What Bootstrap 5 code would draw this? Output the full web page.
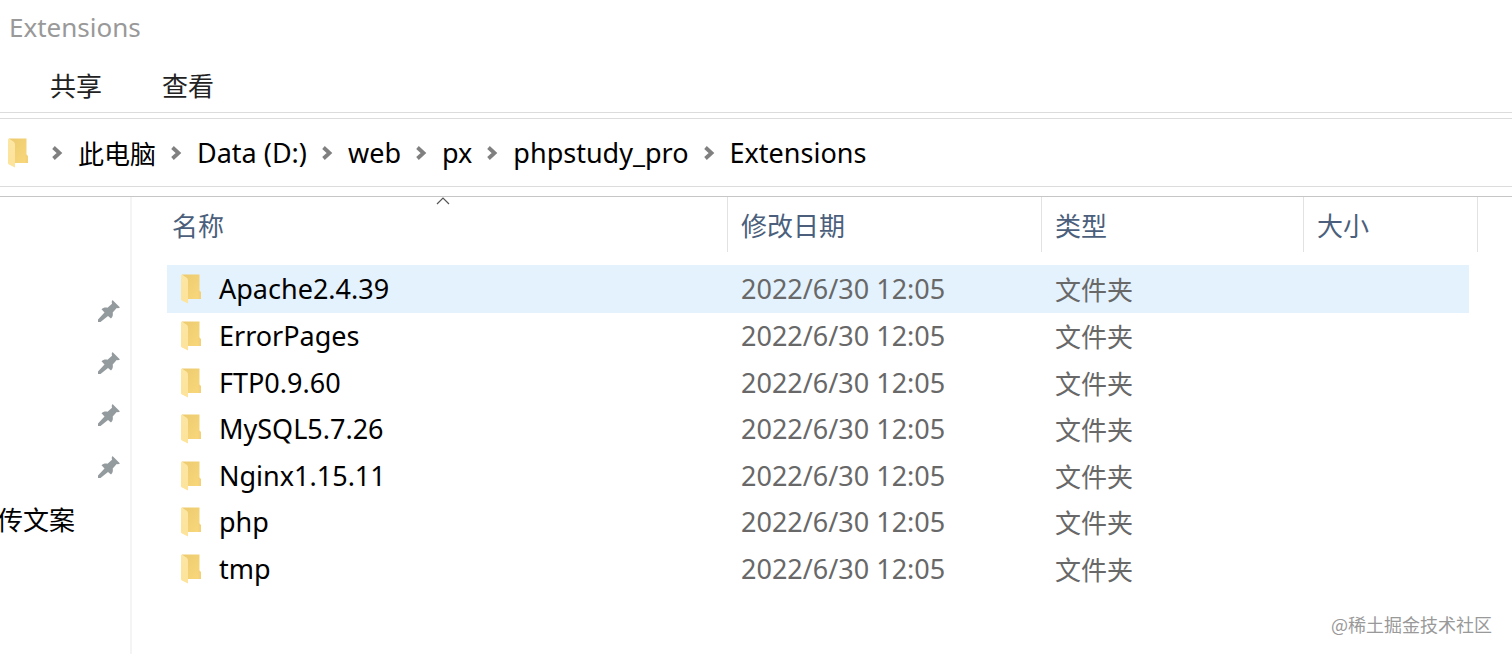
<!DOCTYPE html>
<html lang="zh-CN">
<head>
<meta charset="utf-8">
<meta name="viewport" content="width=device-width, initial-scale=1">
<title>Extensions</title>
<link href="https://cdn.jsdelivr.net/npm/bootstrap@5.3.0/dist/css/bootstrap.min.css" rel="stylesheet">
<style>
  body { font-family: "Noto Sans", "Noto Sans CJK SC", sans-serif; font-size: 27px; line-height: 36px; color: #000; background: #fff; }
  .cjk { font-family: "Noto Sans CJK SC", sans-serif; font-size: 26px; }
  .window-title { height: 54px; padding-left: 9px; color: #999; font-size: 26px; }
  .ribbon { height: 59px; gap: 60px; padding: 4px 50px 0; border-bottom: 1px solid #dcdcdc; }
  .ribbon button { color: #222; font-size: 26px; line-height: 36px; }
  .address { height: 69px; margin-top: 5px; padding-left: 8px; border: solid #dcdcdc; border-width: 1px 0; }
  .address a { color: #000; }
  .folder { width: 21px; height: 30px; }
  .arrow { width: 11px; height: 16px; margin: 0 15px; }
  .panes { margin-top: 9px; border-top: 1px solid #c6c6c6; }
  .sidebar { width: 132px; padding-top: 88px; border-right: 2px solid #f4f4f4; }
  .sidebar li { height: 52px; padding-right: 9px; }
  .sidebar .label { margin-left: -3px; }
  .pin { width: 24px; height: 24px; }
  .files { padding: 0 34px 0 35px; }
  .files table { table-layout: fixed; border-collapse: separate; border-spacing: 0; }
  .files th { height: 55px; padding: 0 0 0 13px; border-right: 1px solid #e2e2e2; color: #4b5f7c; font-weight: 400; vertical-align: middle; }
  .files th:first-child { padding-left: 5px; }
  .files thead::after { content: ""; display: block; height: 13px; }
  .files td { height: 47px; padding: 0 0 0 13px; color: #686868; vertical-align: middle; }
  .files tr:nth-child(even) td { height: 46px; }
  .files td:first-child { padding-left: 14px; color: #000; }
  .files tr.selected td { height: 48px; background: #e4f2fd; background-clip: padding-box; }
  .files td:last-child { border-right: 9px solid transparent; }
  .entry { gap: 17px; }
  .col-date { width: 314px; } .col-type { width: 262px; } .col-size { width: 174px; }
  .sort { width: 14px; height: 8px; top: 0; left: 269px; }
  .watermark { right: 20px; bottom: 16px; font-size: 18px; line-height: 27px; color: #999; }
</style>
</head>
<body class="min-vh-100 d-flex flex-column position-relative overflow-x-hidden">
<svg class="position-absolute" width="0" height="0" aria-hidden="true">
  <defs>
    <linearGradient id="gold" x1="0" y1="0" x2="1" y2="1"><stop offset="0" stop-color="#eccb70"/><stop offset="1" stop-color="#f9d87c"/></linearGradient>
    <linearGradient id="cream" x1="0" y1="0" x2="0" y2="1"><stop offset="0" stop-color="#fce6a4"/><stop offset="1" stop-color="#fde39a"/></linearGradient>
  </defs>
  <symbol id="i-folder" viewBox="0 0 21 30"><path d="M1 .5h17.500v16l1 1.500v7H5L1 22z" fill="url(#gold)"/><path d="M17.500 16l2.500 2v7h-2.500z" fill="#f4d078"/><path d="M1 .5L6 4Q7 5 7 7v22.500L1 26.500Q0 26 0 25V1.500Q0 .500 1 .500z" fill="url(#cream)"/></symbol>
  <symbol id="i-arrow" viewBox="0 0 11 16"><path d="M1.500 2.500L7.500 8l-6 5.500" fill="none" stroke="#808080" stroke-width="3.800"/></symbol>
  <symbol id="i-pin" viewBox="0 0 24 24"><path d="M15.500 1L23 8.500l-2 .8-1.300-.3-4 4.500c.5 2.500 0 4.500-1.700 6L11 17 3.500 23H1v-2.500L7.500 13.500 4.500 10.200c1.700-1.700 3.700-2 6-1.500L15 4.800l-.3-2z" fill="#949b9e"/></symbol>
</svg>

<header>
  <div class="window-title d-flex align-items-center">Extensions</div>
  <nav class="ribbon cjk d-flex align-items-center">
    <button type="button" class="btn p-0 border-0">共享</button>
    <button type="button" class="btn p-0 border-0">查看</button>
  </nav>
  <nav class="address d-flex align-items-center" aria-label="breadcrumb">
    <svg class="folder"><use href="#i-folder"/></svg>
    <ol class="list-unstyled d-flex align-items-center mb-0 ms-2">
      <li class="d-flex align-items-center"><svg class="arrow"><use href="#i-arrow"/></svg><a href="#" class="cjk text-decoration-none">此电脑</a></li>
      <li class="d-flex align-items-center"><svg class="arrow"><use href="#i-arrow"/></svg><a href="#" class="text-decoration-none">Data (D:)</a></li>
      <li class="d-flex align-items-center"><svg class="arrow"><use href="#i-arrow"/></svg><a href="#" class="text-decoration-none">web</a></li>
      <li class="d-flex align-items-center"><svg class="arrow"><use href="#i-arrow"/></svg><a href="#" class="text-decoration-none">px</a></li>
      <li class="d-flex align-items-center"><svg class="arrow"><use href="#i-arrow"/></svg><a href="#" class="text-decoration-none">phpstudy_pro</a></li>
      <li class="d-flex align-items-center"><svg class="arrow"><use href="#i-arrow"/></svg><a href="#" class="text-decoration-none">Extensions</a></li>
    </ol>
  </nav>
</header>

<main class="panes d-flex flex-grow-1">
  <aside class="sidebar flex-shrink-0">
    <ul class="list-unstyled mb-0">
      <li class="d-flex align-items-center justify-content-end"><svg class="pin"><use href="#i-pin"/></svg></li>
      <li class="d-flex align-items-center justify-content-end"><svg class="pin"><use href="#i-pin"/></svg></li>
      <li class="d-flex align-items-center justify-content-end"><svg class="pin"><use href="#i-pin"/></svg></li>
      <li class="d-flex align-items-center justify-content-end"><svg class="pin"><use href="#i-pin"/></svg></li>
      <li class="d-flex align-items-center"><span class="label cjk">传文案</span></li>
    </ul>
  </aside>
  <section class="files flex-grow-1">
    <table class="w-100">
      <colgroup><col><col class="col-date"><col class="col-type"><col class="col-size"></colgroup>
      <thead class="cjk">
        <tr>
          <th scope="col" class="position-relative">名称<svg class="sort position-absolute" viewBox="0 0 14 8"><path d="M1 7l6-6 6 6" fill="none" stroke="#555" stroke-width="1.200"/></svg></th>
          <th scope="col">修改日期</th><th scope="col">类型</th><th scope="col">大小</th>
        </tr>
      </thead>
      <tbody>
        <tr class="selected"><td><div class="entry d-flex align-items-center"><svg class="folder"><use href="#i-folder"/></svg>Apache2.4.39</div></td><td><time>2022/6/30 12:05</time></td><td class="cjk">文件夹</td><td></td></tr>
        <tr><td><div class="entry d-flex align-items-center"><svg class="folder"><use href="#i-folder"/></svg>ErrorPages</div></td><td><time>2022/6/30 12:05</time></td><td class="cjk">文件夹</td><td></td></tr>
        <tr><td><div class="entry d-flex align-items-center"><svg class="folder"><use href="#i-folder"/></svg>FTP0.9.60</div></td><td><time>2022/6/30 12:05</time></td><td class="cjk">文件夹</td><td></td></tr>
        <tr><td><div class="entry d-flex align-items-center"><svg class="folder"><use href="#i-folder"/></svg>MySQL5.7.26</div></td><td><time>2022/6/30 12:05</time></td><td class="cjk">文件夹</td><td></td></tr>
        <tr><td><div class="entry d-flex align-items-center"><svg class="folder"><use href="#i-folder"/></svg>Nginx1.15.11</div></td><td><time>2022/6/30 12:05</time></td><td class="cjk">文件夹</td><td></td></tr>
        <tr><td><div class="entry d-flex align-items-center"><svg class="folder"><use href="#i-folder"/></svg>php</div></td><td><time>2022/6/30 12:05</time></td><td class="cjk">文件夹</td><td></td></tr>
        <tr><td><div class="entry d-flex align-items-center"><svg class="folder"><use href="#i-folder"/></svg>tmp</div></td><td><time>2022/6/30 12:05</time></td><td class="cjk">文件夹</td><td></td></tr>
      </tbody>
    </table>
  </section>
</main>
<div class="watermark cjk position-absolute">@稀土掘金技术社区</div>
<script src="https://cdn.jsdelivr.net/npm/bootstrap@5.3.0/dist/js/bootstrap.bundle.min.js"></script>
</body>
</html>
